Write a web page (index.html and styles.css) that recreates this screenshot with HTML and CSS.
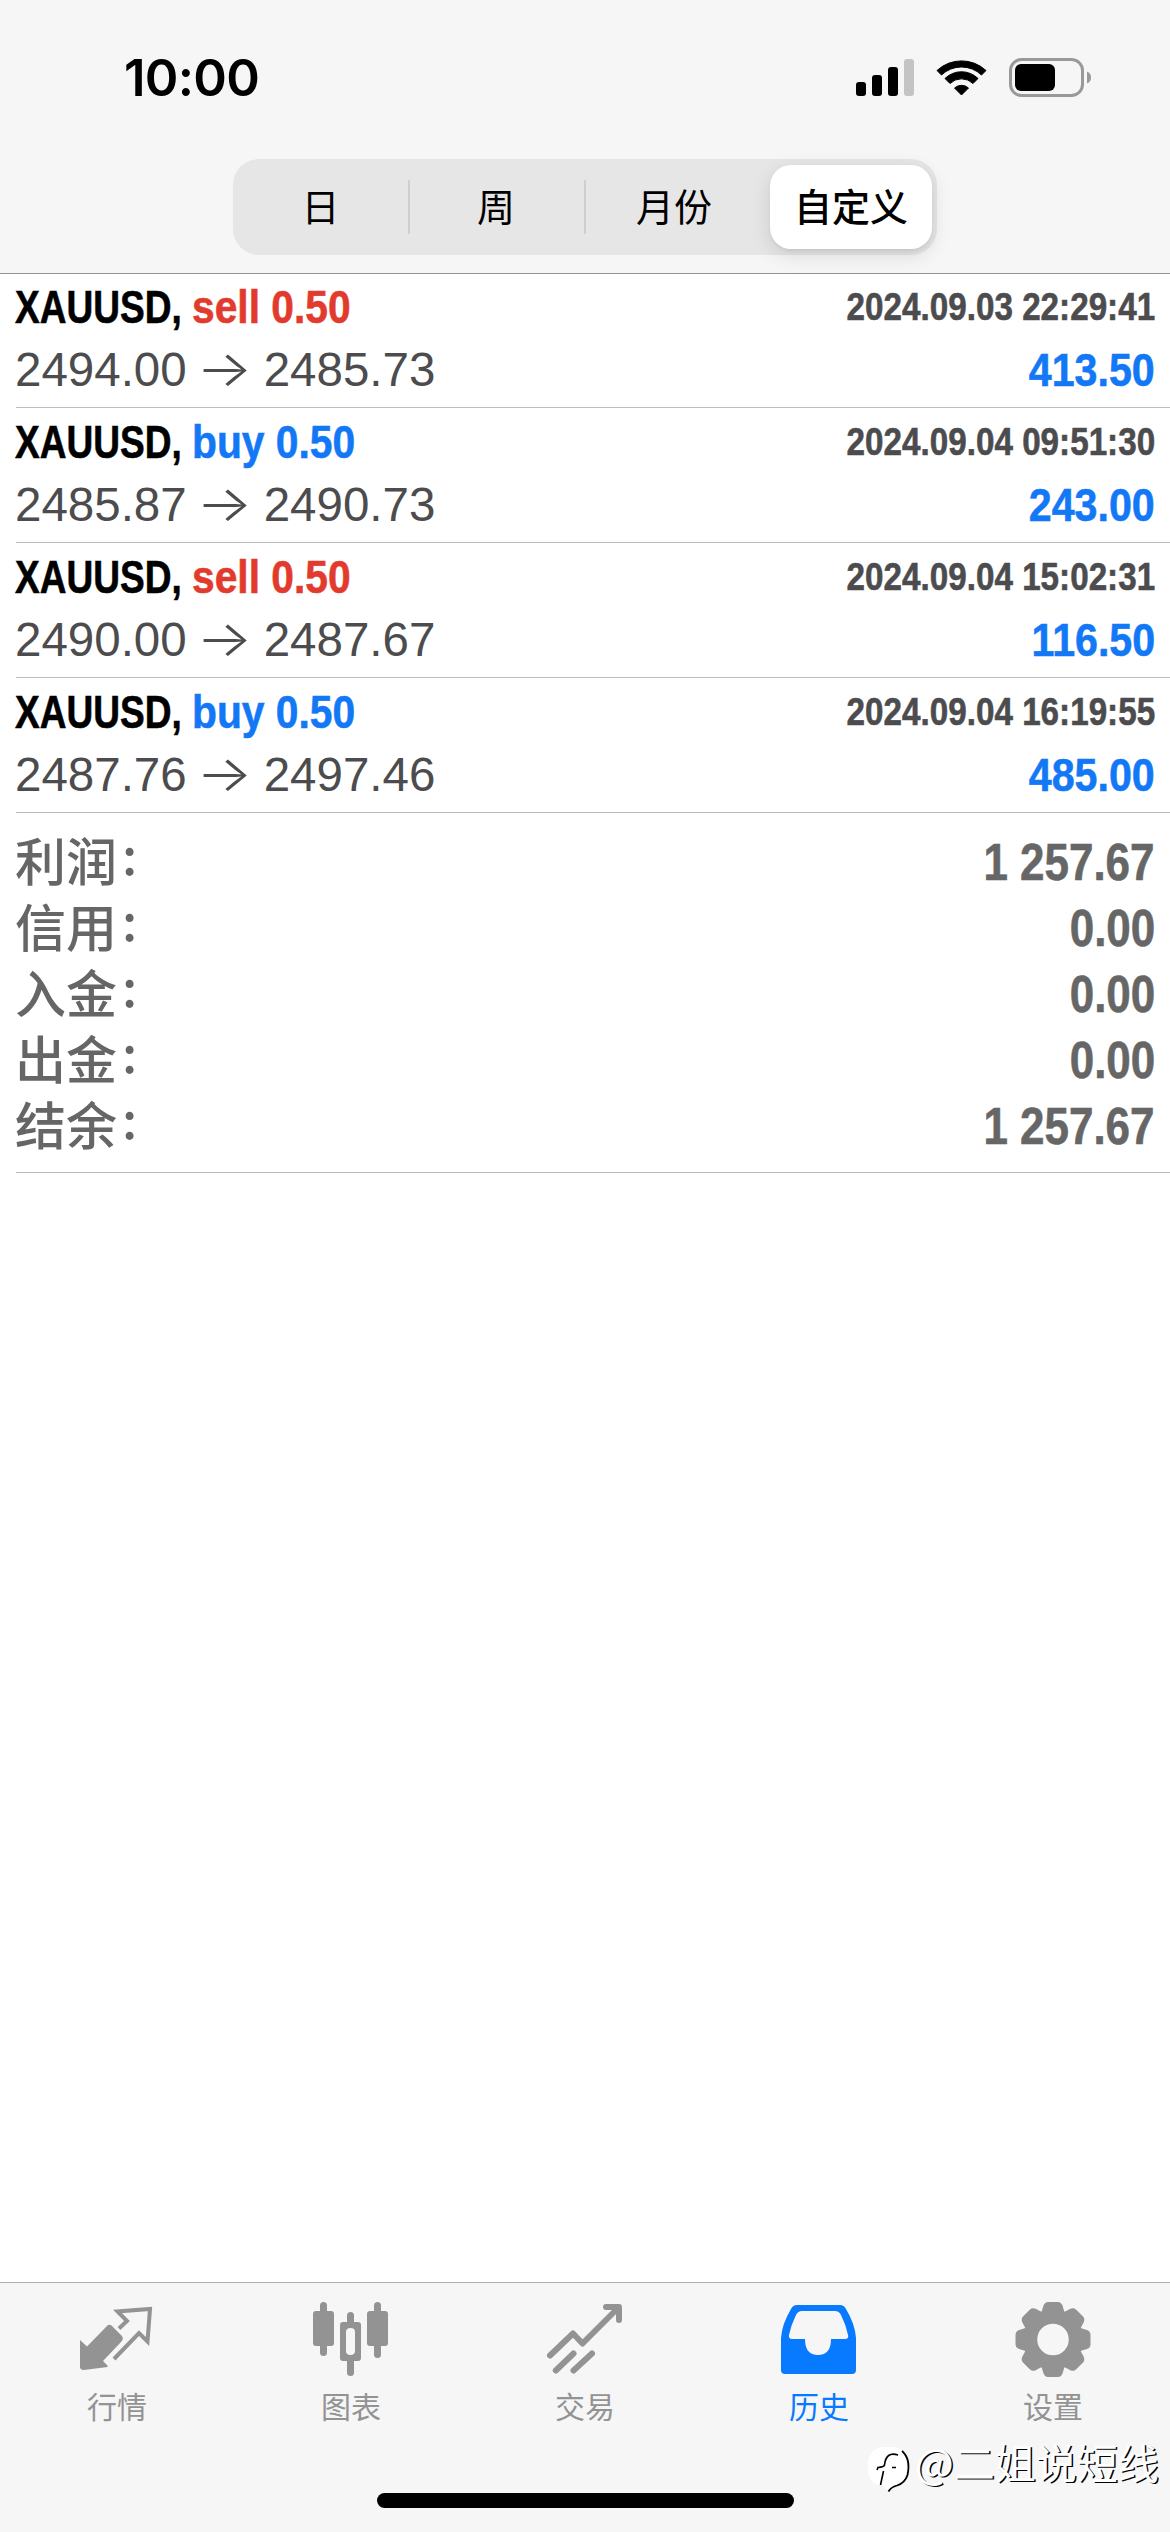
FILE: index.html
```html
<!DOCTYPE html>
<html lang="zh-CN">
<head>
<meta charset="utf-8">
<title>历史</title>
<link rel="stylesheet" href="styles.css">
</head>
<body>
<header class="header">
  <div class="status">
    <div class="clock">10:00</div>
    <svg class="indicators" width="240" height="44" viewBox="0 0 240 44">
      <rect x="3" y="26" width="10" height="14" rx="3"/>
      <rect x="19" y="19" width="10" height="21" rx="3"/>
      <rect x="35" y="11" width="10" height="29" rx="3"/>
      <rect x="51" y="3" width="10" height="37" rx="3" fill="#c4c4c4"/>
      <path d="M84 14.500 A36 36 0 0 1 133 14.500 L128.500 19 A29 29 0 0 0 88.500 19 Z" stroke="#000" stroke-linejoin="round"/>
      <path d="M92 22.500 A23.500 23.500 0 0 1 125 22.500 L120 27.500 A16.500 16.500 0 0 0 97 27.500 Z" stroke="#000" stroke-linejoin="round"/>
      <path d="M101.500 32 A10.500 10.500 0 0 1 115.500 32 L108.500 39 Z" stroke="#000" stroke-linejoin="round"/>
      <rect x="157.500" y="3.500" width="72" height="36" rx="11" fill="none" stroke="#999" stroke-width="3"/>
      <rect x="162" y="8" width="40" height="27" rx="6"/>
      <path d="M234 15.500 Q238 17 238 21.500 T234 27.500 Z" fill="#999"/>
    </svg>
  </div>
  <nav class="segments">
    <span class="segment">日</span>
    <span class="segment divided">周</span>
    <span class="segment divided">月份</span>
    <span class="segment active">自定义</span>
  </nav>
</header>
<main class="history">
  <article class="deal">
    <div class="line"><span class="symbol">XAUUSD,</span><b class="side sell">sell 0.50</b><time>2024.09.03 22:29:41</time></div>
    <div class="line"><span class="prices">2494.00<i>→</i>2485.73</span><span class="profit">413.50</span></div>
  </article>
  <article class="deal">
    <div class="line"><span class="symbol">XAUUSD,</span><b class="side buy">buy 0.50</b><time>2024.09.04 09:51:30</time></div>
    <div class="line"><span class="prices">2485.87<i>→</i>2490.73</span><span class="profit">243.00</span></div>
  </article>
  <article class="deal">
    <div class="line"><span class="symbol">XAUUSD,</span><b class="side sell">sell 0.50</b><time>2024.09.04 15:02:31</time></div>
    <div class="line"><span class="prices">2490.00<i>→</i>2487.67</span><span class="profit">116.50</span></div>
  </article>
  <article class="deal">
    <div class="line"><span class="symbol">XAUUSD,</span><b class="side buy">buy 0.50</b><time>2024.09.04 16:19:55</time></div>
    <div class="line"><span class="prices">2487.76<i>→</i>2497.46</span><span class="profit">485.00</span></div>
  </article>
  <dl class="summary">
    <div><dt>利润<span>:</span></dt><dd>1 257.67</dd></div>
    <div><dt>信用<span>:</span></dt><dd>0.00</dd></div>
    <div><dt>入金<span>:</span></dt><dd>0.00</dd></div>
    <div><dt>出金<span>:</span></dt><dd>0.00</dd></div>
    <div><dt>结余<span>:</span></dt><dd>1 257.67</dd></div>
  </dl>
</main>
<footer class="footer">
  <nav class="tabs">
    <a class="tab">
      <svg width="78" height="78" viewBox="0 0 78 78">
        <path d="M2 31 L9 37.500 L28 18 Q31 14 34 17 L44 27 Q46 30 43 33 L25 52 L29.500 56.500 V58 L6 61 Q2 61 2 58 Z"/>
        <path class="stroked" d="M41 20 L49 12.500 L39.500 3 L72 0.500 L69.500 33 L61 24.500 L36 50.500" stroke="currentColor" stroke-width="4" transform="translate(0 -0.500)"/>
      </svg>
      <span>行情</span>
    </a>
    <a class="tab">
      <svg width="78" height="78" viewBox="0 0 78 78">
        <rect x="8" y="-7" width="7" height="54" rx="3.500"/><rect x="1" y="2" width="21" height="35" rx="3"/>
        <rect x="62" y="-7" width="7" height="56" rx="3.500"/><rect x="55" y="2" width="21" height="35" rx="3"/>
        <rect x="35" y="3" width="7" height="14" rx="3.500"/><rect x="35" y="48" width="7" height="19" rx="3.500"/>
        <path fill-rule="evenodd" d="M31 13 H46 Q49 13 49 16 V49 Q49 52 46 52 H31 Q28 52 28 49 V16 Q28 13 31 13 Z M38.500 19 Q34 19 34 23 V42 Q34 46 38.500 46 Q43 46 43 42 V23 Q43 19 38.500 19 Z"/>
      </svg>
      <span>图表</span>
    </a>
    <a class="tab">
      <svg width="78" height="78" viewBox="0 0 78 78" stroke="currentColor" stroke-width="6" stroke-linecap="round" stroke-linejoin="round">
        <path class="stroked" d="M4 46.500 L27 24.500 L36.500 34.500 L72 -1"/><path class="stroked" d="M60 -2 H73 V11"/>
        <path class="stroked" d="M9.800 61.500 L27.500 44.500 M27.500 61.500 L46 44.500"/>
      </svg>
      <span>交易</span>
    </a>
    <a class="tab selected">
      <svg width="78" height="78" viewBox="0 0 78 78">
        <path fill-rule="evenodd" d="M17 -4 H60 Q64 -4 66 0 Q75 15 76 29 V61 Q76 65 72 65 H5 Q1 65 1 61 V29 Q2 15 11 0 Q13 -4 17 -4 Z M22 2 Q18 2 16 6 Q11 16 9 26 Q8.500 30 12 30 H25 Q25 46 38 46 Q51 46 51 30 H65 Q69 30 68 26 Q66 16 61 6 Q59 2 55 2 Z"/>
      </svg>
      <span>历史</span>
    </a>
    <a class="tab">
      <svg width="78" height="78" viewBox="-39 -39 78 78">
        <g transform="translate(0 -8.500)">
          <path id="tooth" d="M-17 -24 L-13 -26 Q-11.500 -27 -11 -29 L-9.500 -34 Q-8 -37.500 -5 -37.500 H5 Q8 -37.500 9.500 -34 L11 -29 Q11.500 -27 13 -26 L17 -24 Z"/>
          <use href="#tooth" transform="rotate(45)"/><use href="#tooth" transform="rotate(90)"/><use href="#tooth" transform="rotate(135)"/>
          <use href="#tooth" transform="rotate(180)"/><use href="#tooth" transform="rotate(225)"/><use href="#tooth" transform="rotate(270)"/><use href="#tooth" transform="rotate(315)"/>
          <circle r="22.500" fill="none" stroke="currentColor" stroke-width="13.500"/>
        </g>
      </svg>
      <span>设置</span>
    </a>
  </nav>
  <div class="home"></div>
  <div class="watermark">
    <svg width="44" height="48" viewBox="0 0 44 48">
      <path d="M16 2 H24 Q39 3 39 19 Q40 38 27 41 Q23 42 20 46 L16 41 Q0 40 0 24 V18 Q1 3 16 2 Z" fill="#fff"/>
      <path d="M34 6 Q43 14 39.500 30 Q37 38 29 40.500 Q23 42 20.500 46.500" fill="none" stroke="#000" stroke-width="1.800"/>
      <path d="M30 10 Q18 6 16.500 20 Q16 22 10 22.500 L9 25 M15.500 26 L12.500 40 M24 22.500 H28" fill="none" stroke="#000" stroke-width="1.600"/>
    </svg>
    <span>@二姐说短线</span>
  </div>
</footer>
</body>
</html>
```
FILE: styles.css
```css
* { box-sizing: border-box; }
body {
  margin: 0;
  width: 1170px;
  height: 2532px;
  display: flex;
  flex-direction: column;
  overflow: hidden;
  background: #fff;
  font-family: "Liberation Sans", "Noto Sans CJK SC", sans-serif;
}
svg { display: block; fill: currentColor; overflow: visible; }
.stroked { fill: none; }

.header {
  height: 274px;
  display: flex;
  flex-direction: column;
  align-items: center;
  background: #f6f6f6;
  border-bottom: 1px solid #929294;
}
.status {
  width: 100%;
  height: 159px;
  padding: 48px 77px 0 124px;
  display: flex;
  justify-content: space-between;
}
.clock {
  font: 600 51px/60px Inter, sans-serif;
  letter-spacing: -0.7px;
}
.indicators { margin-top: 8px; }

.segments {
  width: 704px;
  height: 96px;
  display: grid;
  grid-template-columns: 175px 176px 180px 173px;
  border-radius: 26px;
  background: #e6e6e7;
  font: 400 38px/92px "Noto Sans CJK SC", sans-serif;
  text-align: center;
}
.divided {
  background: linear-gradient(#cfcfd1, #cfcfd1) 0 50% / 2px 54px no-repeat;
}
.active {
  margin: 6px 5px 6px 6px;
  line-height: 80px;
  border-radius: 21px;
  background: #fff;
  font-weight: 500;
  box-shadow: 0 6px 20px rgba(0, 0, 0, .12), 0 2px 3px rgba(0, 0, 0, .05);
}

.history { flex: 1; padding-left: 16px; }
.deal {
  height: 135px;
  padding: 2px 15px 0 0;
  border-bottom: 1px solid #bcbcbe;
}
.deal:first-child { height: 134px; padding-top: 1px; }
.line {
  height: 63px;
  line-height: 63px;
  display: flex;
  font-size: 47px;
  white-space: nowrap;
}
.symbol, .side, time, .profit, dd {
  font-weight: 700;
  transform-origin: 0 50%;
  -webkit-text-stroke: .6px currentColor;
}
/* condensed bold faces */
.symbol { width: 176px; margin-left: -1px; margin-right: 1px; transform: scaleX(.788); }
.side { transform: scaleX(.867); }
.sell { color: #e23b2e; }
.buy { color: #1378f6; }
time, .profit, dd { margin-left: auto; transform-origin: 100% 50%; }
time {
  font-size: 39px;
  color: #4c4c4e;
  transform: scaleX(.852);
}
.prices { margin-left: -1px; font-size: 47.5px; line-height: 64px; color: #4c4c4e; }
.prices i {
  display: inline-block;
  width: 77px;
  text-align: center;
  text-indent: -2px;
  font: 300 50px/50px Inter, sans-serif;
  transform: scaleX(1.18);
}
.profit { color: #1378f6; line-height: 64px; transform: scaleX(.876); }

.summary {
  margin: 0;
  height: 360px;
  padding: 17px 15px 0 0;
  border-bottom: 1px solid #bcbcbe;
  color: #666;
}
.summary div {
  height: 66px;
  display: flex;
}
dt {
  display: flex;
  margin-left: -1px;
  font: 500 51px/59px "Noto Sans CJK SC", sans-serif;
}
dt span { padding-left: 5px; line-height: 46px; }
dd { font-size: 51px; line-height: 65px; transform: scaleX(.862); }

.footer {
  position: relative;
  height: 250px;
  display: flex;
  flex-direction: column;
  align-items: center;
  background: #f6f6f6;
  border-top: 1px solid #aeaeb0;
}
.tabs {
  width: 100%;
  height: 210px;
  display: grid;
  grid-template-columns: repeat(5, 1fr);
  color: #939393;
}
.tab {
  display: flex;
  flex-direction: column;
  align-items: center;
  padding-top: 26px;
  font: 400 30px/36px "Noto Sans CJK SC", sans-serif;
}
.selected { color: #087aff; }
.home {
  width: 417px;
  height: 15px;
  border-radius: 8px;
  background: #000;
}
.watermark {
  position: absolute;
  left: 868px;
  top: 162px;
  display: flex;
  gap: 3px;
  color: #fff;
  font: 400 41px/33px "Noto Sans CJK SC", sans-serif;
  text-shadow: 1.5px 1px 0 #000;
}
```
